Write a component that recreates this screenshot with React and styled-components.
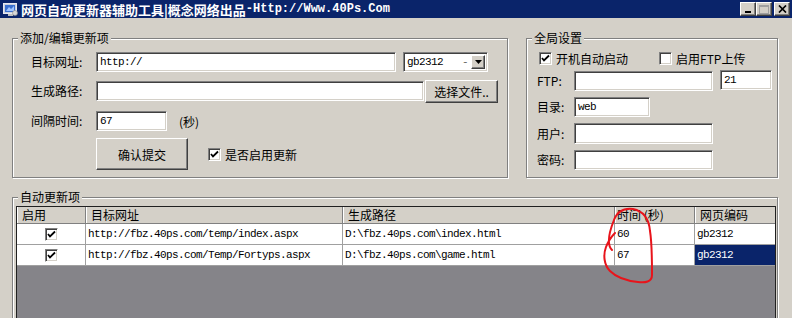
import styled, { createGlobalStyle } from 'styled-components'

const GlobalStyle = createGlobalStyle`
  html, body { margin: 0; padding: 0; background: #d4d0c8; }
  body { font-family: "Noto Sans CJK SC", "Liberation Sans", sans-serif; font-size: 12px; color: #000; }
`

const Window = styled.div`
  width: 792px;
  height: 318px;
  background: #d4d0c8;
  overflow: hidden;
  display: flex;
  flex-direction: column;
`

const TitleBar = styled.div`
  height: 18px;
  background: #0a246a;
  display: flex;
  align-items: center;
  padding: 0 2px 0 3px;
  flex-shrink: 0;
`

const TitleText = styled.div`
  margin-left: 3px;
  color: #fff;
  font-weight: bold;
  font-size: 12px;
  white-space: nowrap;
  flex: 1;
  display: flex;
  align-items: center;
`

const TitleCjk = styled.span`
  font-family: "Noto Sans CJK SC", sans-serif;
  font-size: 13px;
`

const TitleLatin = styled.span`
  font-family: "Liberation Mono", monospace;
  font-size: 12px;
`

const CaptionButton = styled.div`
  width: 14px;
  height: 12px;
  margin-left: ${p => p.$gap || 0}px;
  background: #d4d0c8;
  border: 1px solid;
  border-color: #fff #404040 #404040 #fff;
  box-shadow: inset -1px -1px #808080;
  display: flex;
  align-items: center;
  justify-content: center;
`

const TopRow = styled.div`
  display: flex;
  margin: 20px 0 0 12px;
  gap: 18px;
`

const GroupBox = styled.div`
  width: ${p => p.$w}px;
  height: ${p => p.$h}px;
  box-sizing: border-box;
  border: 1px solid #808080;
  box-shadow: inset 1px 1px #fff, 1px 1px #fff;
  flex-shrink: 0;
`

const Legend = styled.div`
  width: fit-content;
  margin: -8px 0 0 5px;
  padding: 0 2px;
  height: 14px;
  line-height: 14px;
  background: #d4d0c8;
  white-space: nowrap;
`

const FormRow = styled.div`
  display: flex;
  align-items: center;
  height: ${p => p.$h || 20}px;
  margin-top: ${p => p.$gap}px;
  padding-left: ${p => p.$pad}px;
`

const Label = styled.div`
  width: ${p => p.$w}px;
  flex-shrink: 0;
  white-space: nowrap;
  line-height: 14px;
`

const TextBox = styled.div`
  width: ${p => p.$w}px;
  height: ${p => p.$h || 20}px;
  box-sizing: border-box;
  margin-left: ${p => p.$ml || 0}px;
  margin-top: ${p => p.$mt || 0}px;
  background: #fff;
  border: 1px solid;
  border-color: #808080 #fff #fff #808080;
  box-shadow: inset 1px 1px #404040, inset -1px -1px #d4d0c8;
  padding: 0 3px;
  display: flex;
  align-items: center;
  font-family: "Liberation Mono", monospace;
  font-size: 11px;
  letter-spacing: -0.6px;
  flex-shrink: 0;
`

const ComboArrow = styled.div`
  width: 14px;
  height: 14px;
  box-sizing: border-box;
  background: #d4d0c8;
  border: 1px solid;
  border-color: #fff #404040 #404040 #fff;
  box-shadow: inset -1px -1px #808080;
  display: flex;
  align-items: center;
  justify-content: center;
  margin-right: -1px;
`

const ComboDot = styled.span`
  margin-left: auto;
  margin-right: 3px;
  color: #666;
`

const Button = styled.div`
  width: ${p => p.$w}px;
  height: ${p => p.$h}px;
  box-sizing: border-box;
  margin-left: ${p => p.$ml || 0}px;
  background: #d4d0c8;
  border: 1px solid;
  border-color: #fff #404040 #404040 #fff;
  box-shadow: inset -1px -1px #808080;
  display: flex;
  align-items: center;
  justify-content: center;
  white-space: nowrap;
  flex-shrink: 0;
`

const Unit = styled.div`
  margin-left: 12px;
`

const CheckLabel = styled.label`
  display: flex;
  align-items: center;
  margin-left: ${p => p.$ml || 0}px;
  white-space: nowrap;
  gap: 4px;
`

const CheckBoxBox = styled.span`
  width: 13px;
  height: 13px;
  box-sizing: border-box;
  background: #fff;
  border: 1px solid;
  border-color: #808080 #fff #fff #808080;
  box-shadow: inset 1px 1px #404040, inset -1px -1px #d4d0c8;
  display: inline-flex;
  align-items: center;
  justify-content: center;
  flex-shrink: 0;
`

const BottomGroup = styled.div`
  margin: 19px 14px 0 12px;
  border: 1px solid #808080;
  box-shadow: inset 1px 1px #fff, 1px 1px #fff;
  flex: 1;
  min-height: 130px;
`

const Table = styled.div`
  position: relative;
  margin: 2px 1px 0 3px;
  border: 1px solid #202020;
  border-bottom: none;
  background: #858489;
  height: 120px;
`

const GridRow = styled.div`
  display: grid;
  grid-template-columns: 69px 257px 272px 80px 80px;
`

const HeadCell = styled.div`
  height: 16px;
  line-height: 16px;
  padding-left: ${p => p.$pl ?? 5}px;
  background: #d4d0c8;
  border-right: 1px solid #808080;
  border-bottom: 1px solid #808080;
  box-shadow: inset 1px 0 #fff;
  white-space: nowrap;
  &:last-child { border-right: none; }
`

const Cell = styled.div`
  height: 21px;
  box-sizing: border-box;
  border-right: 1px solid #a0a0a0;
  border-bottom: 1px solid #a0a0a0;
  background: ${p => (p.$sel ? '#0a246a' : '#fff')};
  color: ${p => (p.$sel ? '#fff' : '#000')};
  display: flex;
  align-items: center;
  justify-content: ${p => (p.$center ? 'center' : 'flex-start')};
  padding-left: ${p => (p.$center ? 0 : 2)}px;
  font-family: "Liberation Mono", monospace;
  font-size: 11px;
  letter-spacing: -0.6px;
  white-space: nowrap;
  overflow: hidden;
  &:last-child { border-right: none; }
`

const Annotation = styled.svg`
  position: absolute;
  left: 585px;
  top: -2px;
  pointer-events: none;
`

const Check = () => (
  <svg width="9" height="9" viewBox="0 0 9 9">
    <path d="M1 4 L3 6.5 L8 1.5" fill="none" stroke="#000" strokeWidth="1.8" />
  </svg>
)

const CheckBox = ({ checked }) => <CheckBoxBox>{checked && <Check />}</CheckBoxBox>

const AppIcon = () => (
  <svg width="15" height="15" viewBox="0 0 15 15">
    <rect x="0.5" y="1.5" width="13" height="10" fill="#c8d0e0" stroke="#e8e8f0" />
    <rect x="2" y="3" width="10" height="7" fill="#3a6fd0" />
    <path d="M3 9 L6 5 L8 7 L11 4 L11 9 Z" fill="#9fc4ff" />
    <rect x="5" y="12" width="5" height="2" fill="#c0c0c0" />
    <circle cx="12" cy="11" r="2.5" fill="#d8d8d8" stroke="#888" strokeWidth="0.6" />
  </svg>
)

const rows = [
  { url: 'http://fbz.40ps.com/temp/index.aspx', path: 'D:\\fbz.40ps.com\\index.html', time: '60', enc: 'gb2312' },
  { url: 'http://fbz.40ps.com/Temp/Fortyps.aspx', path: 'D:\\fbz.40ps.com\\game.html', time: '67', enc: 'gb2312', sel: true },
]

export default function App() {
  return (
    <Window>
      <GlobalStyle />
      <TitleBar>
        <AppIcon />
        <TitleText>
          <TitleCjk>网页自动更新器辅助工具|概念网络出品</TitleCjk>
          <TitleLatin>-Http://Www.40Ps.Com</TitleLatin>
        </TitleText>
        <CaptionButton>
          <svg width="8" height="8" viewBox="0 0 8 8"><rect x="1" y="6" width="6" height="2" fill="#000" /></svg>
        </CaptionButton>
        <CaptionButton>
          <svg width="10" height="9" viewBox="0 0 10 9"><rect x="0.5" y="0.5" width="9" height="8" fill="none" stroke="#a0a0a0" /><rect x="0" y="0" width="10" height="2" fill="#a0a0a0" /></svg>
        </CaptionButton>
        <CaptionButton $gap={2}>
          <svg width="9" height="8" viewBox="0 0 9 8"><path d="M1 0.5 L8 7.5 M8 0.5 L1 7.5" stroke="#000" strokeWidth="1.7" /></svg>
        </CaptionButton>
      </TitleBar>

      <TopRow>
        <GroupBox $w={496} $h={140}>
          <Legend>添加/编辑更新项</Legend>
          <FormRow $gap={7} $pad={18}>
            <Label $w={65}>目标网址:</Label>
            <TextBox $w={300}>http://</TextBox>
            <TextBox $w={85} $ml={7}>
              gb2312
              <ComboDot>-</ComboDot>
              <ComboArrow>
                <svg width="7" height="4" viewBox="0 0 7 4"><path d="M0 0 H7 L3.5 4 Z" fill="#000" /></svg>
              </ComboArrow>
            </TextBox>
          </FormRow>
          <FormRow $gap={9} $pad={18}>
            <Label $w={65}>生成路径:</Label>
            <TextBox $w={328} />
            <Button $w={73} $h={23} $ml={1}>选择文件..</Button>
          </FormRow>
          <FormRow $gap={10} $pad={18}>
            <Label $w={65}>间隔时间:</Label>
            <TextBox $w={71}>67</TextBox>
            <Unit>(秒)</Unit>
          </FormRow>
          <FormRow $gap={7} $h={32} $pad={18}>
            <Label $w={65} />
            <Button $w={92} $h={32}>确认提交</Button>
            <CheckLabel $ml={20}>
              <CheckBox checked />
              是否启用更新
            </CheckLabel>
          </FormRow>
        </GroupBox>

        <GroupBox $w={252} $h={140}>
          <Legend>全局设置</Legend>
          <FormRow $gap={5} $h={16} $pad={12}>
            <CheckLabel>
              <CheckBox checked />
              开机自动启动
            </CheckLabel>
            <CheckLabel $ml={31}>
              <CheckBox />
              启用FTP上传
            </CheckLabel>
          </FormRow>
          <FormRow $gap={5} $pad={10}>
            <Label $w={37}>FTP:</Label>
            <TextBox $w={139} />
            <TextBox $w={52} $ml={7} $mt={-2}>21</TextBox>
          </FormRow>
          <FormRow $gap={6} $pad={10}>
            <Label $w={37}>目录:</Label>
            <TextBox $w={76}>web</TextBox>
          </FormRow>
          <FormRow $gap={6} $h={21} $pad={10}>
            <Label $w={37}>用户:</Label>
            <TextBox $w={139} $h={21} />
          </FormRow>
          <FormRow $gap={6} $pad={10}>
            <Label $w={37}>密码:</Label>
            <TextBox $w={139} />
          </FormRow>
        </GroupBox>
      </TopRow>

      <BottomGroup>
        <Legend>自动更新项</Legend>
        <Table>
          <GridRow>
            <HeadCell>启用</HeadCell>
            <HeadCell>目标网址</HeadCell>
            <HeadCell>生成路径</HeadCell>
            <HeadCell $pl={2}>时间 (秒)</HeadCell>
            <HeadCell>网页编码</HeadCell>
          </GridRow>
          {rows.map(r => (
            <GridRow key={r.url}>
              <Cell $center><CheckBox checked /></Cell>
              <Cell>{r.url}</Cell>
              <Cell>{r.path}</Cell>
              <Cell>{r.time}</Cell>
              <Cell $sel={r.sel}>{r.enc}</Cell>
            </GridRow>
          ))}
          <Annotation width="60" height="84" viewBox="0 0 60 84">
            <path
              d="M10 45 C5 40 6 30 12 15 C15 7 22 3 31 4 C41 6 47 14 48 26 C50 38 50 57 50 70 C50 77 43 78 36 77 C26 76 16 74 8 66 C2 60 1 50 4 42 C6 37 9 32 13 28"
              fill="none"
              stroke="#e8141b"
              strokeWidth="2"
              strokeLinecap="round"
            />
          </Annotation>
        </Table>
      </BottomGroup>
    </Window>
  )
}
